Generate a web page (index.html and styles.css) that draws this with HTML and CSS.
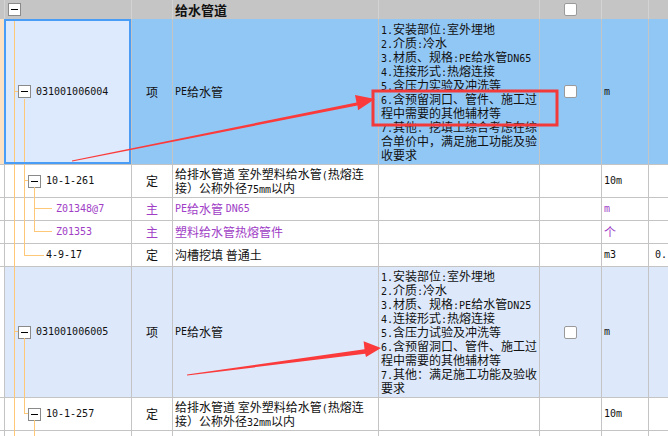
FILE: index.html
```html
<!DOCTYPE html>
<html lang="zh">
<head>
<meta charset="utf-8">
<link rel="stylesheet" href="styles.css">
</head>
<body>
<div class="page">
  <div class="row r-head">
    <div class="c"></div>
    <div class="c p-head"><span class="exp"></span></div>
    <div class="c"></div>
    <div class="c"><b class="title">给水管道</b></div>
    <div class="c"></div>
    <div class="c ctr"><span class="cb"></span></div>
    <div class="c"></div>
    <div class="c"></div>
  </div>

  <div class="row r-item1 bg-blue">
    <div class="c peach"></div>
    <div class="c sel p-l1"><span class="exp"></span><span class="en">031001006004</span></div>
    <div class="c ctr">项</div>
    <div class="c"><span class="en">PE</span>给水管</div>
    <div class="c"><div class="desc">
      <div class="ln"><span class="en">1.</span>安装部位<span class="en">:</span>室外埋地</div>
      <div class="ln"><span class="en">2.</span>介质<span class="en">:</span>冷水</div>
      <div class="ln"><span class="en">3.</span>材质、规格<span class="en">:PE</span>给水管<span class="en">DN65</span></div>
      <div class="ln"><span class="en">4.</span>连接形式<span class="en">:</span>热熔连接</div>
      <div class="ln"><span class="en">5.</span>含压力实验及冲洗等</div>
      <div class="ln"><span class="en">6.</span>含预留洞口、管件、施工过</div>
      <div class="ln">程中需要的其他辅材等</div>
      <div class="ln"><span class="en">7.</span>其他：挖填土综合考虑在综</div>
      <div class="ln">合单价中，满足施工功能及验</div>
      <div class="ln">收要求</div>
    </div></div>
    <div class="c ctr"><span class="cb"></span></div>
    <div class="c"><span class="en">m</span></div>
    <div class="c"></div>
  </div>

  <div class="row r-def">
    <div class="c"></div>
    <div class="c p-l2"><span class="exp"></span><span class="en">10-1-261</span></div>
    <div class="c ctr">定</div>
    <div class="c"><div class="desc">
      <div class="ln">给排水管道 室外塑料给水管<span class="en">(</span>热熔连</div>
      <div class="ln">接）公称外径<span class="en">75mm</span>以内</div>
    </div></div>
    <div class="c"></div>
    <div class="c"></div>
    <div class="c"><span class="en">10m</span></div>
    <div class="c"></div>
  </div>

  <div class="row r-sub purple">
    <div class="c"></div>
    <div class="c p-l3"><span class="en">Z01348@7</span></div>
    <div class="c ctr">主</div>
    <div class="c"><span class="en">PE</span>给水管&nbsp;<span class="en">DN65</span></div>
    <div class="c"></div>
    <div class="c"></div>
    <div class="c"><span class="en">m</span></div>
    <div class="c"></div>
  </div>

  <div class="row r-sub purple">
    <div class="c"></div>
    <div class="c p-l3"><span class="en">Z01353</span></div>
    <div class="c ctr">主</div>
    <div class="c">塑料给水管热熔管件</div>
    <div class="c"></div>
    <div class="c"></div>
    <div class="c">个</div>
    <div class="c"></div>
  </div>

  <div class="row r-sub">
    <div class="c"></div>
    <div class="c p-l2t"><span class="en">4-9-17</span></div>
    <div class="c ctr">定</div>
    <div class="c">沟槽挖填 普通土</div>
    <div class="c"></div>
    <div class="c"></div>
    <div class="c"><span class="en">m3</span></div>
    <div class="c p-num"><span class="en">0.</span></div>
  </div>

  <div class="row r-item2 bg-light">
    <div class="c white"></div>
    <div class="c p-l1"><span class="exp"></span><span class="en">031001006005</span></div>
    <div class="c ctr">项</div>
    <div class="c"><span class="en">PE</span>给水管</div>
    <div class="c"><div class="desc">
      <div class="ln"><span class="en">1.</span>安装部位<span class="en">:</span>室外埋地</div>
      <div class="ln"><span class="en">2.</span>介质<span class="en">:</span>冷水</div>
      <div class="ln"><span class="en">3.</span>材质、规格<span class="en">:PE</span>给水管<span class="en">DN25</span></div>
      <div class="ln"><span class="en">4.</span>连接形式<span class="en">:</span>热熔连接</div>
      <div class="ln"><span class="en">5.</span>含压力试验及冲洗等</div>
      <div class="ln"><span class="en">6.</span>含预留洞口、管件、施工过</div>
      <div class="ln">程中需要的其他辅材等</div>
      <div class="ln"><span class="en">7.</span>其他：满足施工功能及验收</div>
      <div class="ln">要求</div>
    </div></div>
    <div class="c ctr"><span class="cb"></span></div>
    <div class="c"><span class="en">m</span></div>
    <div class="c"></div>
  </div>

  <div class="row r-def">
    <div class="c"></div>
    <div class="c p-l2"><span class="exp"></span><span class="en">10-1-257</span></div>
    <div class="c ctr">定</div>
    <div class="c"><div class="desc">
      <div class="ln">给排水管道 室外塑料给水管<span class="en">(</span>热熔连</div>
      <div class="ln">接）公称外径<span class="en">32mm</span>以内</div>
    </div></div>
    <div class="c"></div>
    <div class="c"></div>
    <div class="c"><span class="en">10m</span></div>
    <div class="c"></div>
  </div>

  <div class="row r-sub purple">
    <div class="c"></div>
    <div class="c p-l3"><span class="en">Z01348@5</span></div>
    <div class="c ctr">主</div>
    <div class="c"><span class="en">PE</span>给水管&nbsp;<span class="en">DN25</span></div>
    <div class="c"></div>
    <div class="c"></div>
    <div class="c"><span class="en">m</span></div>
    <div class="c"></div>
  </div>

  <svg class="overlay" width="668" height="436" viewBox="0 0 668 436">
    <g class="tree">
      <path d="M14.5 19V436"/>
      <path d="M14 91.5H18"/>
      <path d="M24.5 99V255.5"/>
      <path d="M24 180.5H28"/>
      <path d="M34.5 187V231.5"/>
      <path d="M34 208.5H52"/>
      <path d="M34 231.5H52"/>
      <path d="M24 255.5H44"/>
      <path d="M14 331.5H18"/>
      <path d="M24.5 338V413.5"/>
      <path d="M24 413.5H28"/>
      <path d="M34.5 420V436"/>
    </g>
    <rect class="selbox" x="5" y="20" width="125" height="143"/>
    <rect class="redbox" x="373" y="91" width="184" height="34"/>
    <polygon class="arrow" points="71.9,160.4 356.5,102.4 355.0,95.0 375,99 358.0,110.2 357.5,105.5 72.1,161.6"/>
    <polygon class="arrow" points="187,374.5 364.5,349.3 363.6,341.2 381,348 366.0,357.0 365.2,353.7 187.1,375.6"/>
  </svg>
</div>
</body>
</html>
```
FILE: styles.css
```css
body {
  margin: 0;
  background: #fff;
}
.page {
  position: relative;
  width: 668px;
  height: 436px;
  overflow: hidden;
  font-family: "Noto Sans CJK SC", "Noto Sans", sans-serif;
  font-size: 12px;
  color: #111;
  background: #fff;
}
.row {
  display: grid;
  grid-template-columns: 5px 127px 41px 206px 161px 62px 47px 40px;
}
.c {
  box-sizing: border-box;
  border-right: 1px solid #c4c4c4;
  border-bottom: 1px solid #c4c4c4;
  display: flex;
  align-items: center;
  white-space: nowrap;
  overflow: hidden;
  padding-left: 2px;
  line-height: 14px;
}
.c.ctr {
  justify-content: center;
  padding-left: 0;
}
.r-head { height: 19px; background: #c5c5c5; }
.r-head .c { border-right-color: #d3d3d3; border-bottom: none; }
.r-item1 { height: 146px; }
.r-def { height: 33px; }
.r-sub { height: 23px; }
.r-item2 { height: 131px; }

.bg-blue .c { background: #91c7f5; }
.bg-blue .c.sel { background: #dde9fc; }
.bg-blue .c.peach { background: #fde3c4; }
.bg-light .c { background: #dde9fb; }
.bg-light .c.white { background: #fff; }

.purple { color: #a03ec6; }

.p-head { padding-left: 3px; }
.p-l1 { padding-left: 13px; }
.p-l2 { padding-left: 23px; }
.p-l2t { padding-left: 41px; }
.p-l3 { padding-left: 51px; }
.p-num { padding-left: 6px; }

.title {
  font-weight: bold;
  font-size: 13px;
}
.en {
  font-family: "DejaVu Sans Mono", monospace;
  font-size: 10px;
  line-height: 10px;
}
.desc {
  display: flex;
  flex-direction: column;
}
.ln {
  height: 14px;
  line-height: 14px;
  white-space: nowrap;
}
.exp {
  flex: none;
  box-sizing: border-box;
  width: 13px;
  height: 13px;
  border: 1px solid #8a8a8a;
  background: #fff;
  display: flex;
  align-items: center;
  justify-content: center;
  margin-right: 5px;
}
.exp::after {
  content: "";
  width: 7px;
  height: 1px;
  background: #000;
}
.cb {
  box-sizing: border-box;
  width: 13px;
  height: 13px;
  border: 1px solid #9a9a9a;
  border-radius: 2px;
  background: #fff;
}
.overlay {
  position: absolute;
  left: 0;
  top: 0;
  pointer-events: none;
}
.tree path {
  stroke: #ffc878;
  stroke-width: 1;
  fill: none;
  shape-rendering: crispEdges;
}
.selbox {
  fill: none;
  stroke: #4a9df6;
  stroke-width: 2;
}
.redbox {
  fill: none;
  stroke: #f23a3a;
  stroke-width: 3;
}
.arrow {
  fill: #fb3b3b;
}
```
